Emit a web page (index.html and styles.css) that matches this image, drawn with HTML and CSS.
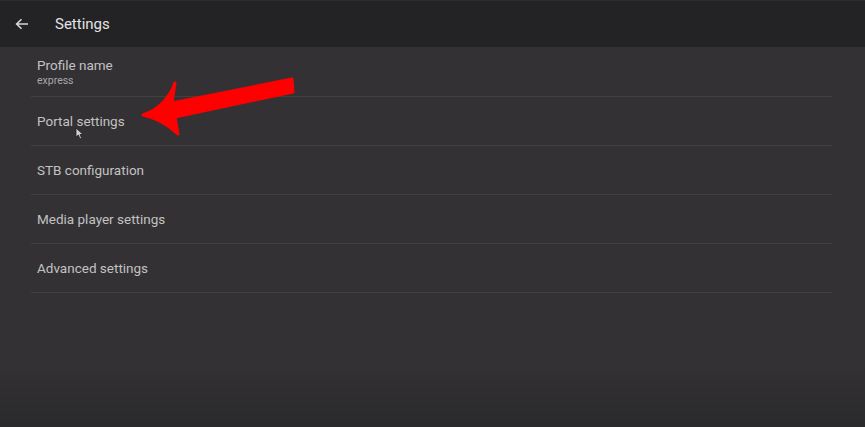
FILE: index.html
```html
<!DOCTYPE html>
<html lang="en">
  <head>
    <meta charset="UTF-8" />
    <meta name="viewport" content="width=device-width, initial-scale=1.0" />
    <title>Settings</title>
    <link rel="stylesheet" href="styles.css">
  </head>
  <body>
    <div id="screen">
      <div class="topbar">
        <svg class="back" width="14" height="12" viewBox="0 0 14 12">
          <path d="M13 6H2M6.5 1.2L1.6 6l4.9 4.8" fill="none" stroke="#d6d6d6" stroke-width="1.6" />
        </svg>
        <span class="title">Settings</span>
      </div>

      <div class="list">
        <div class="row">
          <div class="row-title">Profile name</div>
          <div class="row-sub">express</div>
        </div>
        <div class="row"><div class="row-title">Portal settings</div></div>
        <div class="row"><div class="row-title">STB configuration</div></div>
        <div class="row"><div class="row-title">Media player settings</div></div>
        <div class="row"><div class="row-title">Advanced settings</div></div>
      </div>

      <!-- pointer drawn over the list -->
      <svg class="pointer" width="170" height="70" viewBox="0 0 170 70">
        <path d="M32 28L152 4L153 17L35 42L38 59Q22 44 3 40Q26 32 35 8Z"
          fill="#ff0000" stroke="#ff0000" stroke-width="3" stroke-linejoin="round" />
      </svg>

      <svg class="cursor" width="10" height="13" viewBox="0 0 10 13">
        <path d="M1 1L1 10L3.3 8L5 12L6.6 11.3L5 7.5L8 7.5Z" fill="#d0d0d0" stroke="#222" stroke-width="0.8" />
      </svg>
    </div>
  </body>
</html>
```

FILE: styles.css
```css
body {
  margin: 0;
  background: #2a292b;
  font-family: Roboto, "Noto Sans", sans-serif;
}
#screen {
  position: relative;
  width: 865px;
  height: 427px;
  overflow: hidden;
  background: linear-gradient(to bottom, #333134 0%, #333134 85%, #2a292b 100%);
}
.topbar {
  height: 47px;
  display: flex;
  align-items: center;
  background: #232224;
  border-top: 1px solid #2e2d2f;
  box-sizing: border-box;
  padding-left: 15px;
}
.title {
  margin-left: 26px;
  font-size: 15px;
  color: #e4e4e4;
}
.list {
  margin: 0 33px 0 31px;
  padding-top: 1px;
}
.row {
  height: 48px;
  border-bottom: 1px solid #414043;
  padding-left: 6px;
  display: flex;
  flex-direction: column;
  justify-content: center;
}
.row-title {
  font-size: 13.5px;
  color: #c2c2c2;
}
.row-sub {
  font-size: 10.5px;
  color: #a8a8a8;
  margin-top: 1px;
}
.pointer {
  position: absolute;
  left: 140px;
  top: 75px;
}
.cursor {
  position: absolute;
  left: 75px;
  top: 127px;
}
```
